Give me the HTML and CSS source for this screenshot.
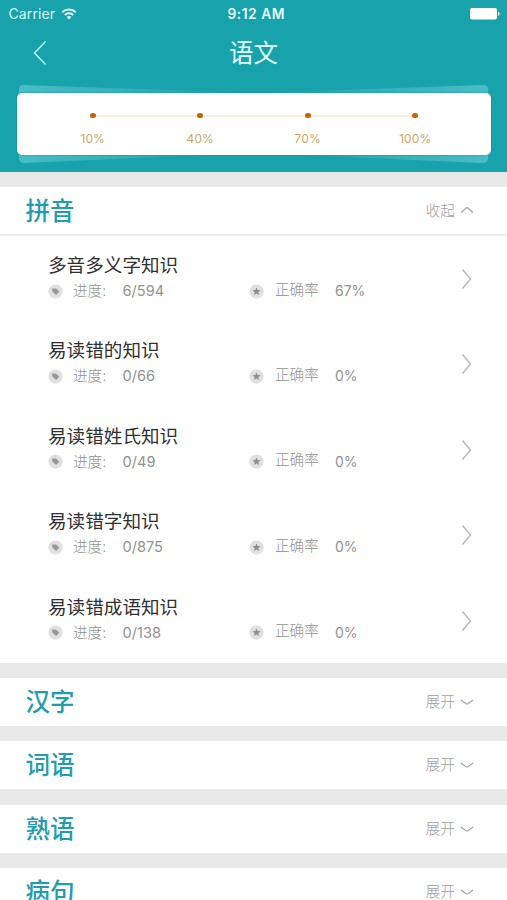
FILE: index.html
```html
<!DOCTYPE html>
<html lang="zh-CN">
<head>
<meta charset="utf-8">
<meta name="viewport" content="width=device-width, initial-scale=1">
<title>语文</title>
<link rel="stylesheet" href="styles.css">
</head>
<body>
<svg class="defs" aria-hidden="true">
  <symbol id="tag" viewBox="0 0 16 16"><circle cx="8" cy="8" r="7.6" fill="#e0e0e0"/><path d="M4.400 4.800h4.200l3.500 3.400-3.500 3.500-4.200-4z" fill="#999"/></symbol>
  <symbol id="star" viewBox="0 0 16 16"><circle cx="8" cy="8" r="7.6" fill="#e0e0e0"/><path d="M8 3.600l1.200 2.900 3.100.2-2.400 2 .8 3.100L8 10.100l-2.700 1.700.8-3.100-2.400-2 3.100-.2z" fill="#8e8e8e"/></symbol>
  <symbol id="next" viewBox="0 0 12 22"><path d="M1.500 1.500L9.500 11l-8 9.500" fill="none" stroke="#b8b8b8" stroke-width="1.400"/></symbol>
  <symbol id="down" viewBox="0 0 14 8"><path d="M1 2l5.200 3.800q.8.500 1.600 0L13 2" fill="none" stroke="#a6a6a6" stroke-width="1.300"/></symbol>
  <symbol id="up" viewBox="0 0 14 8"><path d="M1 6.500l5.300-4.600q.7-.5 1.400 0L13 6.500" fill="none" stroke="#a6a6a6" stroke-width="1.300"/></symbol>
</svg>
<div class="screen">
  <header class="header">
    <div class="status">
      <div class="carrier"><span>Carrier</span>
        <svg class="wifi" viewBox="0 0 16 12"><g fill="none" stroke="#e6ffff" stroke-width="2"><path d="M1.200 4.300a9.800 9.800 0 0 1 13.600 0"/><path d="M3.800 7a6 6 0 0 1 8.400 0"/></g><path d="M8 11.500L5.600 9.100a3.400 3.400 0 0 1 4.800 0z" fill="#e6ffff"/></svg>
      </div>
      <div class="time">9:12 AM</div>
      <svg class="battery" viewBox="0 0 30 12"><rect width="27" height="11.500" rx="2" fill="#fff"/><path d="M28 3.800q1.700.5 1.700 2t-1.700 2z" fill="#fff"/></svg>
    </div>
    <nav class="nav">
      <svg class="back" viewBox="0 0 14 26"><path d="M12.500 1.500L1.500 13l11 11.500" fill="none" stroke="#c5ffff" stroke-width="1.300"/></svg>
      <h1>语文</h1>
    </nav>
    <div class="deck">
      <svg class="sheets" viewBox="0 0 475 80" preserveAspectRatio="none">
        <defs><linearGradient id="left"><stop stop-color="#48bdc5"/><stop offset="1" stop-color="#1fa5af"/></linearGradient><linearGradient id="right"><stop stop-color="#1fa5af"/><stop offset="1" stop-color="#48bdc5"/></linearGradient></defs>
        <g fill="url(#left)"><path d="M3 11V5Q3 1 8 1L220 8.500V11z"/><path d="M3 69v5Q3 79 8 79L190 71v-2z"/></g>
        <g fill="url(#right)"><path d="M472 11V5Q472 1 467 1L255 8.500V11z"/><path d="M472 69v5Q472 79 467 79L285 71v-2z"/></g>
      </svg>
      <div class="card">
        <div class="step"><i></i><span>10%</span></div>
        <div class="step"><i></i><span>40%</span></div>
        <div class="step"><i></i><span>70%</span></div>
        <div class="step"><i></i><span>100%</span></div>
      </div>
    </div>
  </header>

  <section class="group open">
    <div class="head"><h2>拼音</h2><div class="toggle"><span>收起</span><svg><use href="#up"/></svg></div></div>
    <ul>
      <li><div class="info"><h3>多音多义字知识</h3><div class="meta"><svg><use href="#tag"/></svg><span class="label">进度:</span><span class="num">6/594</span><svg><use href="#star"/></svg><span class="rate">正确率</span><span class="num percent">67%</span></div></div><svg class="next"><use href="#next"/></svg></li>
      <li><div class="info"><h3>易读错的知识</h3><div class="meta"><svg><use href="#tag"/></svg><span class="label">进度:</span><span class="num">0/66</span><svg><use href="#star"/></svg><span class="rate">正确率</span><span class="num percent">0%</span></div></div><svg class="next"><use href="#next"/></svg></li>
      <li><div class="info"><h3>易读错姓氏知识</h3><div class="meta"><svg><use href="#tag"/></svg><span class="label">进度:</span><span class="num">0/49</span><svg><use href="#star"/></svg><span class="rate">正确率</span><span class="num percent">0%</span></div></div><svg class="next"><use href="#next"/></svg></li>
      <li><div class="info"><h3>易读错字知识</h3><div class="meta"><svg><use href="#tag"/></svg><span class="label">进度:</span><span class="num">0/875</span><svg><use href="#star"/></svg><span class="rate">正确率</span><span class="num percent">0%</span></div></div><svg class="next"><use href="#next"/></svg></li>
      <li><div class="info"><h3>易读错成语知识</h3><div class="meta"><svg><use href="#tag"/></svg><span class="label">进度:</span><span class="num">0/138</span><svg><use href="#star"/></svg><span class="rate">正确率</span><span class="num percent">0%</span></div></div><svg class="next"><use href="#next"/></svg></li>
    </ul>
  </section>
  <section class="group"><div class="head"><h2>汉字</h2><div class="toggle"><span>展开</span><svg><use href="#down"/></svg></div></div></section>
  <section class="group"><div class="head"><h2>词语</h2><div class="toggle"><span>展开</span><svg><use href="#down"/></svg></div></div></section>
  <section class="group"><div class="head"><h2>熟语</h2><div class="toggle"><span>展开</span><svg><use href="#down"/></svg></div></div></section>
  <section class="group"><div class="head"><h2>病句</h2><div class="toggle"><span>展开</span><svg><use href="#down"/></svg></div></div></section>
</div>
</body>
</html>
```
FILE: styles.css
```css
* { box-sizing: border-box; margin: 0; padding: 0; }
body { background: #e9e9e9; font-family: Inter, "Noto Sans CJK SC", sans-serif; }
.defs { display: none; }
svg { display: block; flex: none; }
.screen { height: 900px; overflow: hidden; }

.header { height: 172px; background: #18a2ac; margin-bottom: 15px; }
.status { height: 27px; display: grid; grid-template-columns: 1fr auto 1fr; align-items: center; padding: 0 7px 0 8.500px; }
.carrier { display: flex; align-items: center; gap: 6px; font-size: 14px; color: #d5fbfb; letter-spacing: .1px; }
.wifi { width: 16px; height: 12px; }
.time { font-size: 13.800px; font-weight: 600; color: #e6ffff; letter-spacing: .5px; margin-left: 4px; }
.battery { width: 30px; height: 12px; justify-self: end; }
.nav { height: 50px; display: grid; grid-template-columns: 1fr auto 1fr; align-items: center; padding: 2px 33px 0; }
.back { width: 14px; height: 26px; }
.nav h1 { font-size: 24.500px; line-height: 36px; font-weight: 400; color: #e2ffff; }

.deck { display: grid; margin: 7px 16px 0; height: 80px; }
.sheets, .card { grid-area: 1 / 1; }
.sheets { width: 475px; height: 80px; }
.card { margin: 9.300px 0 8.700px 1px; width: 474px; background: #fff; border-radius: 5px; box-shadow: 0 0 1.500px #087e88; padding: 0 22px; display: flex; justify-content: center; z-index: 1; }
.step { width: 107.600px; display: flex; flex-direction: column; align-items: center; gap: 12.700px; padding-top: 19.300px; }
.step i { width: 5.600px; height: 5.600px; border-radius: 50%; background: #c86408; }
.step span { font-size: 12px; line-height: 15px; color: #d0a763; letter-spacing: .1px; }
.step:not(:last-child) i::after { content: ""; display: block; width: 102px; height: 2px; margin: 2px 0 0 5.600px; background: #fdf0e1; }

.group { background: #fff; margin-bottom: 15.500px; }
.head { height: 48px; display: flex; align-items: center; justify-content: space-between; padding: 0 33px 0 25.500px; }
.open .head { height: 49px; border-bottom: 2px solid #ececec; padding-top: 1px; }
.group.open { margin-bottom: 15px; }
.head h2 { font-size: 24.500px; line-height: 36px; font-weight: 500; color: #229dad; }
.toggle { display: flex; align-items: center; gap: 5px; font-size: 14.700px; line-height: 22px; font-weight: 300; color: #a0a0a0; }
.toggle svg { width: 14px; height: 8px; }
.open .toggle svg { margin-bottom: 2px; }

ul { list-style: none; }
li { height: 85.400px; display: flex; justify-content: space-between; padding: 15px 34px 0 48px; }
h3 { font-size: 18.600px; line-height: 28px; font-weight: 400; color: #303030; }
.meta { display: grid; grid-template-columns: 25px 49.500px 126.500px 26px 60px 50px; align-items: center; height: 24px; font-size: 14.600px; line-height: 22px; color: #929292; }
.meta svg { width: 15px; height: 15px; margin-left: -.5px; }
.meta .label { font-weight: 300; }
.meta .rate { font-weight: 300; margin-top: -3px; }
.meta .percent { font-size: 14px; }
.next { width: 12px; height: 22px; margin-top: 17px; }
```
